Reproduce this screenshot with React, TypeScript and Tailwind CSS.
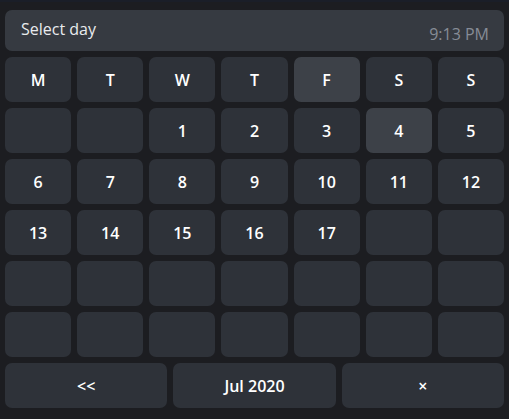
import React from "react";

const days = ["M", "T", "W", "T", "F", "S", "S"];
const grid: string[] = [
  "", "", "1", "2", "3", "4", "5",
  "6", "7", "8", "9", "10", "11", "12",
  "13", "14", "15", "16", "17", "", "",
  "", "", "", "", "", "", "",
  "", "", "", "", "", "", "",
];

export default function App() {
  return (
    <div
      className="w-[509px] h-[419px] bg-[#1c1d21] flex flex-col"
      style={{ fontFamily: '"Open Sans", "Noto Sans", sans-serif' }}
    >
      <div className="h-[2px] bg-[#1a1e28]" />
      <div className="px-[5px] pt-[8px] flex flex-col gap-[6px]">
        <div className="h-[41px] rounded-[7px] bg-[#363a41] flex justify-between pl-[16px] pr-[15px]">
          <span className="text-[16px] text-[#e9ebee] pt-[8px] leading-[22px]">Select day</span>
          <span className="text-[16px] text-[#868c96] self-end pb-[6px] leading-[22px]">9:13 PM</span>
        </div>
        <div className="grid grid-cols-7 gap-[6px]">
          {days.map((d, i) => (
            <div
              key={"d" + i}
              className={
                "h-[45px] rounded-[7px] flex items-center justify-center text-[16px] font-semibold text-white " +
                (i === 4 ? "bg-[#3d4148]" : "bg-[#2e3239]")
              }
            >
              {d}
            </div>
          ))}
          {grid.map((d, i) => (
            <div
              key={"g" + i}
              className={
                "h-[45px] rounded-[7px] flex items-center justify-center text-[16px] font-semibold text-white " +
                (i === 5 ? "bg-[#3d4148]" : "bg-[#2e3239]")
              }
            >
              {d}
            </div>
          ))}
        </div>
        <div className="grid grid-cols-3 gap-[6px]">
          <div className="h-[45px] rounded-[7px] bg-[#2e3239] flex items-center justify-center text-[16px] font-semibold text-white">&lt;&lt;</div>
          <div className="h-[45px] rounded-[7px] bg-[#2e3239] flex items-center justify-center text-[16px] font-semibold text-white">Jul 2020</div>
          <div className="h-[45px] rounded-[7px] bg-[#2e3239] flex items-center justify-center text-[16px] font-semibold text-white">×</div>
        </div>
      </div>
    </div>
  );
}
